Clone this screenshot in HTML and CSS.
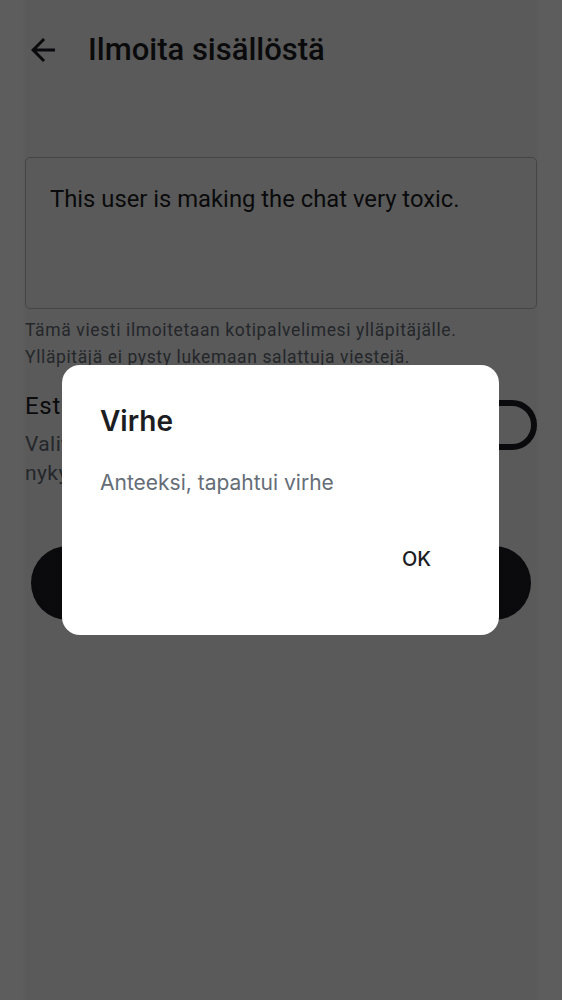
FILE: index.html
```html
<!DOCTYPE html>
<html lang="fi">
<head>
<meta charset="utf-8">
<title>Ilmoita sisällöstä</title>
<link rel="stylesheet" href="styles.css">
</head>
<body>
<div class="screen">
  <header class="topbar">
    <button class="back" aria-label="Takaisin">
      <svg viewBox="0 0 24 24" width="36" height="36"><path d="M20 11H7.83l5.59-5.59L12 4l-8 8 8 8 1.41-1.41L7.83 13H20v-2z" fill="#1b1d22"/></svg>
    </button>
    <h1 class="title">Ilmoita sisällöstä</h1>
  </header>

  <main class="content">
    <div class="field">This user is making the chat very toxic.</div>
    <p class="helper">Tämä viesti ilmoitetaan kotipalvelimesi ylläpitäjälle.<br>Ylläpitäjä ei pysty lukemaan salattuja viestejä.</p>

    <div class="block-row">
      <div class="block-text">
        <div class="block-label">Estä käyttäjä</div>
        <div class="block-desc"><span class="line">Valitse, haluatko piilottaa tämän käyttäjän</span><span class="line">nykyiset ja tulevat viestit</span></div>
      </div>
      <div class="switch"><span class="thumb"></span></div>
    </div>

    <button class="send">Lähetä ilmoitus</button>
  </main>

  <div class="scrim"></div>

  <div class="dialog" role="alertdialog">
    <h2 class="dlg-title">Virhe</h2>
    <p class="dlg-body">Anteeksi, tapahtui virhe</p>
    <div class="dlg-actions"><button class="dlg-ok">OK</button></div>
  </div>
</div>
</body>
</html>
```

FILE: styles.css
```css
* { box-sizing: border-box; }
html, body { margin: 0; padding: 0; }
body {
  width: 562px;
  height: 1000px;
  background: #ffffff;
  font-family: Roboto, "Liberation Sans", sans-serif;
  color: #1b1d22;
  overflow: hidden;
}
.screen {
  position: relative;
  width: 562px;
  height: 1000px;
  padding-top: 31px;
  overflow: hidden;
}
.topbar {
  display: flex;
  align-items: center;
  height: 38px;
  padding-left: 25px;
}
.back {
  width: 36px;
  height: 36px;
  padding: 0;
  border: 0;
  background: none;
  display: flex;
}
.title {
  margin: 0 0 0 27px;
  font-size: 31px;
  line-height: 36px;
  font-weight: 500;
  color: #1b1d22;
}
.content {
  padding: 88px 25px 0 25px;
  display: flex;
  flex-direction: column;
}
.field {
  height: 152px;
  border: 1px solid #bfc2c6;
  border-radius: 5px;
  padding: 24px 24px 0 24px;
  font-size: 23.8px;
  line-height: 34px;
  color: #1b1d22;
}
.helper {
  margin: 8px 0 0 0;
  font-size: 17.5px;
  line-height: 27px;
  letter-spacing: 0.62px;
  color: #656d77;
}
.block-row {
  display: flex;
  align-items: flex-start;
  justify-content: space-between;
  margin-top: 20px;
}
.block-label {
  font-size: 24px;
  line-height: 30px;
  letter-spacing: 0.7px;
  color: #1b1d22;
}
.block-desc {
  margin-top: 9px;
  font-size: 21px;
  line-height: 29px;
  letter-spacing: 0.4px;
  color: #656d77;
  display: flex;
  flex-direction: column;
  white-space: nowrap;
}
.switch {
  margin-top: 9px;
  width: 80px;
  height: 50px;
  border: 6px solid #1b1d22;
  border-radius: 25px;
  display: flex;
  align-items: center;
  padding-left: 7px;
  flex-shrink: 0;
}
.thumb {
  width: 24px;
  height: 24px;
  border-radius: 50%;
  background: #1b1d22;
}
.send {
  margin: 58px 6px 0 6px;
  height: 74px;
  border: 0;
  border-radius: 37px;
  background: #1b1d22;
  color: #ffffff;
  font-family: Roboto, "Liberation Sans", sans-serif;
  font-size: 22px;
  font-weight: 500;
}
.scrim {
  position: absolute;
  inset: 0;
  background: linear-gradient(to right,
    rgba(0,0,0,0.634) 0px,
    rgba(0,0,0,0.634) 22px,
    rgba(0,0,0,0.646) 26px,
    rgba(0,0,0,0.646) 536px,
    rgba(0,0,0,0.634) 540px,
    rgba(0,0,0,0.634) 562px);
}
.dialog {
  position: absolute;
  left: 62px;
  top: 365px;
  width: 437px;
  height: 270px;
  background: #ffffff;
  border-radius: 18px;
  padding: 38px 38px 0 38px;
}
.dlg-title {
  margin: 0;
  font-family: Inter, Roboto, sans-serif;
  font-size: 28px;
  line-height: 36px;
  font-weight: 600;
  color: #1b1d22;
}
.dlg-body {
  margin: 29px 0 0 0;
  font-family: Inter, Roboto, sans-serif;
  font-size: 21px;
  line-height: 30px;
  color: #656d77;
}
.dlg-actions {
  display: flex;
  justify-content: flex-end;
  margin-top: 37px;
  padding-right: 14px;
}
.dlg-ok {
  border: 0;
  background: none;
  padding: 10px 16px;
  font-family: Inter, Roboto, sans-serif;
  font-size: 20px;
  line-height: 28px;
  font-weight: 500;
  color: #1b1d22;
}
```
